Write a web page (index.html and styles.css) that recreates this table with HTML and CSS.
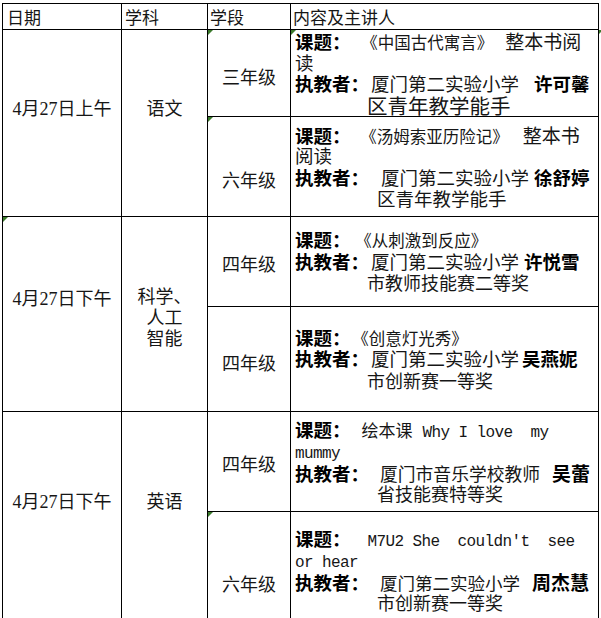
FILE: index.html
```html
<!DOCTYPE html>
<html lang="zh-CN">
<head>
<meta charset="utf-8">
<title>课程安排</title>
<link rel="stylesheet" href="styles.css">
</head>
<body>
<table class="sheet">
  <colgroup>
    <col class="w-date"><col class="w-subj"><col class="w-grade"><col class="w-body">
  </colgroup>
  <tr class="r-head">
    <td class="hd hd-1">日期</td>
    <td class="hd hd-2">学科</td>
    <td class="hd hd-3">学段</td>
    <td class="hd hd-4">内容及主讲人</td>
  </tr>
  <tr class="r-1">
    <td class="side up" rowspan="2">4月27日上午</td>
    <td class="side up" rowspan="2">语文</td>
    <td class="grade mk pt6">三年级</td>
    <td class="c mk mkr">
      <div class="ln"><b class="lb">课题：</b><span class="ti ml19">《中国古代寓言》</span><span class="s19 ml12">整本书阅</span></div>
      <div class="ln">读</div>
      <div class="ln"><b class="lb">执教者：</b><span class="ml2">厦门第二实验小学</span><b class="lb ml15">许可馨</b></div>
      <div class="ln ind72 s20">区青年教学能手</div>
    </td>
  </tr>
  <tr class="r-2">
    <td class="grade mk pt26">六年级</td>
    <td class="c">
      <div class="ln"><b class="lb">课题：</b><span class="ti ml18">《汤姆索亚历险记》</span><span class="s19 ml14">整本书</span></div>
      <div class="ln">阅读</div>
      <div class="ln"><b class="lb">执教者：</b><span class="ml12">厦门第二实验小学</span><b class="lb ml5">徐舒婷</b></div>
      <div class="ln ind82">区青年教学能手</div>
    </td>
  </tr>
  <tr class="r-3">
    <td class="side up2 mk" rowspan="2">4月27日下午</td>
    <td class="side multi" rowspan="2">科学、<br>人工<br>智能</td>
    <td class="grade pt4">四年级</td>
    <td class="c">
      <div class="ln"><b class="lb">课题：</b><span class="ti ml13">《从刺激到反应》</span></div>
      <div class="ln"><b class="lb">执教者：</b><span class="ml2">厦门第二实验小学</span><b class="lb ml5">许悦雪</b></div>
      <div class="ln ind72 s18">市教师技能赛二等奖</div>
    </td>
  </tr>
  <tr class="r-4">
    <td class="grade pt6">四年级</td>
    <td class="c">
      <div class="ln"><b class="lb">课题：</b><span class="ti ml10">《创意灯光秀》</span></div>
      <div class="ln"><b class="lb">执教者：</b><span class="ml2">厦门第二实验小学</span><b class="lb ml3">吴燕妮</b></div>
      <div class="ln ind72 s18">市创新赛一等奖</div>
    </td>
  </tr>
  <tr class="r-5">
    <td class="side up" rowspan="2">4月27日下午</td>
    <td class="side up" rowspan="2">英语</td>
    <td class="grade pt4">四年级</td>
    <td class="c">
      <div class="ln"><b class="lb">课题：</b><span class="s17 ml11">绘本课</span><span class="en ml10">Why I love  my</span></div>
      <div class="ln"><span class="en">mummy</span></div>
      <div class="ln"><b class="lb">执教者：</b><span class="s178 ml11">厦门市音乐学校教师</span><b class="lb s19 ml12">吴蕾</b></div>
      <div class="ln ind82 s18">省技能赛特等奖</div>
    </td>
  </tr>
  <tr class="r-6">
    <td class="grade mk pt34">六年级</td>
    <td class="c pt8">
      <div class="ln"><b class="lb">课题：</b><span class="en ml17">M7U2 She  couldn't  see</span></div>
      <div class="ln"><span class="en">or hear</span></div>
      <div class="ln"><b class="lb">执教者：</b><span class="s175 ml11">厦门第二实验小学</span><b class="lb s19 ml12">周杰慧</b></div>
      <div class="ln ind82 s18">市创新赛一等奖</div>
    </td>
  </tr>
</table>
</body>
</html>
```

FILE: styles.css
```css
html, body {
  margin: 0;
  padding: 0;
  overflow: hidden;
  background: #ffffff;
}

body {
  font-family: "Liberation Serif", "Noto Sans CJK SC", serif;
  color: #161616;
}

.sheet {
  margin: 3px 0 0 2px;
  border-collapse: collapse;
  table-layout: fixed;
  width: 596px;
}

.w-date { width: 119px; }
.w-subj { width: 86px; }
.w-grade { width: 83px; }
.w-body { width: 308px; }

.sheet td {
  border: 1px solid #000;
  padding: 0;
  vertical-align: middle;
  position: relative;
}

.r-head { height: 26px; }
.r-1 { height: 86px; }
.r-2 { height: 100px; }
.r-3 { height: 90px; }
.r-4 { height: 105px; }
.r-5 { height: 100px; }
.r-6 { height: 110px; }

/* header */
.hd {
  font-family: "Noto Sans CJK SC", sans-serif;
  font-size: 17px;
  line-height: 20px;
  text-align: left;
}
.sheet .hd-1 { padding-left: 4px; }
.sheet .hd-2 { padding-left: 3px; }
.sheet .hd-3 { padding-left: 2px; }
.sheet .hd-4 { padding-left: 2px; }

/* date / subject columns */
.side {
  font-size: 18px;
  line-height: 21px;
  text-align: center;
}
.sheet .up { padding-bottom: 28px; }
.sheet .up2 { padding-bottom: 30px; }
.sheet .multi { padding-top: 8px; }

/* grade column */
.grade {
  font-family: "Noto Sans CJK SC", sans-serif;
  font-size: 18px;
  line-height: 21px;
  text-align: center;
}
.sheet .pt4 { padding-top: 4px; }
.sheet .pt6 { padding-top: 6px; }
.sheet .pt8 { padding-top: 8px; }
.sheet .pt26 { padding-top: 26px; }
.sheet .pt34 { padding-top: 34px; }

/* content column */
.sheet .c {
  font-family: "Noto Sans CJK SC", sans-serif;
  font-size: 18.5px;
  line-height: 21.5px;
  padding-left: 4px;
}
.ln {
  white-space: nowrap;
  height: 21.5px;
}
.lb {
  font-weight: 700;
  color: #000;
}
.ti { font-size: 16.5px; }
.en {
  font-family: "Liberation Mono", monospace;
  font-size: 16px;
  letter-spacing: -0.6px;
  white-space: pre;
}
.s17 { font-size: 17px; }
.s175 { font-size: 17.5px; }
.s178 { font-size: 17.8px; }
.s18 { font-size: 18px; }
.s19 { font-size: 19px; }
.s20 { font-size: 20.5px; }

.ml2 { margin-left: 2px; }
.ml3 { margin-left: 3px; }
.ml5 { margin-left: 5px; }
.ml10 { margin-left: 10px; }
.ml11 { margin-left: 11px; }
.ml12 { margin-left: 12px; }
.ml13 { margin-left: 13px; }
.ml14 { margin-left: 14px; }
.ml15 { margin-left: 15px; }
.ml17 { margin-left: 17px; }
.ml18 { margin-left: 18px; }
.ml19 { margin-left: 19px; }

.ind72 { padding-left: 72px; }
.ind82 { padding-left: 82px; }

/* small green cell markers */
.mk::before {
  content: "";
  position: absolute;
  left: 0;
  top: 0;
  border-top: 5px solid #3b7a2c;
  border-right: 5px solid transparent;
}
.mkr::after {
  content: "";
  position: absolute;
  right: -5px;
  top: 0;
  border-top: 4px solid #3b7a2c;
  border-right: 4px solid transparent;
}
```
